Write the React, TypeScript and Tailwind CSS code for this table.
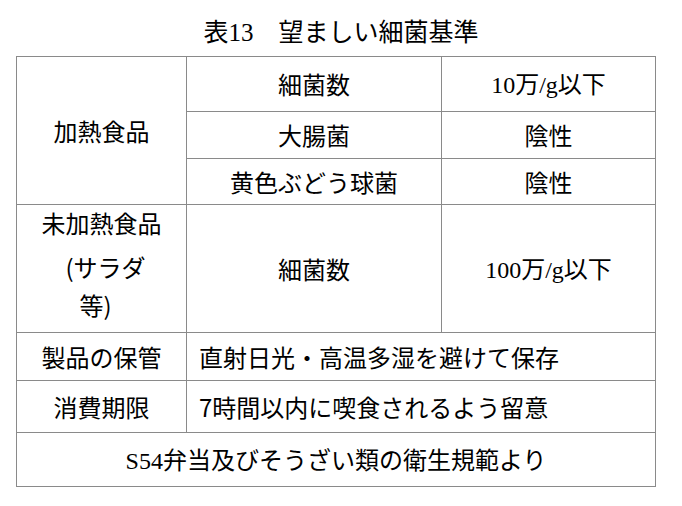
import React from "react";

const cjk = { fontFamily: '"Noto Sans CJK JP", "Noto Sans", sans-serif' } as const;
const serif = { fontFamily: '"Liberation Serif", "Noto Sans CJK JP", serif' } as const;

const td = "border border-[#8a8a8a] p-0 text-center align-middle";

export default function App() {
  return (
    <div className="w-[682px] h-[506px] bg-white text-black text-[24px] leading-none" style={cjk}>
      <div className="h-[56px] flex items-center justify-center pt-[6px] text-[25px]">
        <span>
          <span style={serif}>表13</span>　望ましい細菌基準
        </span>
      </div>
      <table className="ml-[16px] w-[639px] border-collapse table-fixed">
        <colgroup>
          <col className="w-[170px]" />
          <col className="w-[255px]" />
          <col className="w-[214px]" />
        </colgroup>
        <tbody>
          <tr className="h-[55px]">
            <td className={td} rowSpan={3}>加熱食品</td>
            <td className={td}>細菌数</td>
            <td className={td}>
              <span style={serif}>10万/g</span>以下
            </td>
          </tr>
          <tr className="h-[47px]">
            <td className={td}>大腸菌</td>
            <td className={td}>陰性</td>
          </tr>
          <tr className="h-[46px]">
            <td className={td}>黄色ぶどう球菌</td>
            <td className={td}>陰性</td>
          </tr>
          <tr className="h-[128px]">
            <td className={`${td} !align-top`}>
              <div className="flex flex-col items-center">
                <div className="h-[36px] flex items-center">未加熱食品</div>
                <div className="h-[52px] flex items-center pl-[8px]">(サラダ</div>
                <div className="h-[24px] flex items-center pr-[12px]">等)</div>
              </div>
            </td>
            <td className={td}>細菌数</td>
            <td className={td}>
              <span style={serif}>100万/g</span>以下
            </td>
          </tr>
          <tr className="h-[48px]">
            <td className={td}>製品の保管</td>
            <td className={`${td} !text-left pl-[12px]`} colSpan={2}>
              直射日光・高温多湿を避けて保存
            </td>
          </tr>
          <tr className="h-[52px]">
            <td className={td}>消費期限</td>
            <td className={`${td} !text-left pl-[12px]`} colSpan={2}>
              7時間以内に喫食されるよう留意
            </td>
          </tr>
          <tr className="h-[54px]">
            <td className={td} colSpan={3}>
              <span style={serif}>S54</span>弁当及びそうざい類の衛生規範より
            </td>
          </tr>
        </tbody>
      </table>
    </div>
  );
}
